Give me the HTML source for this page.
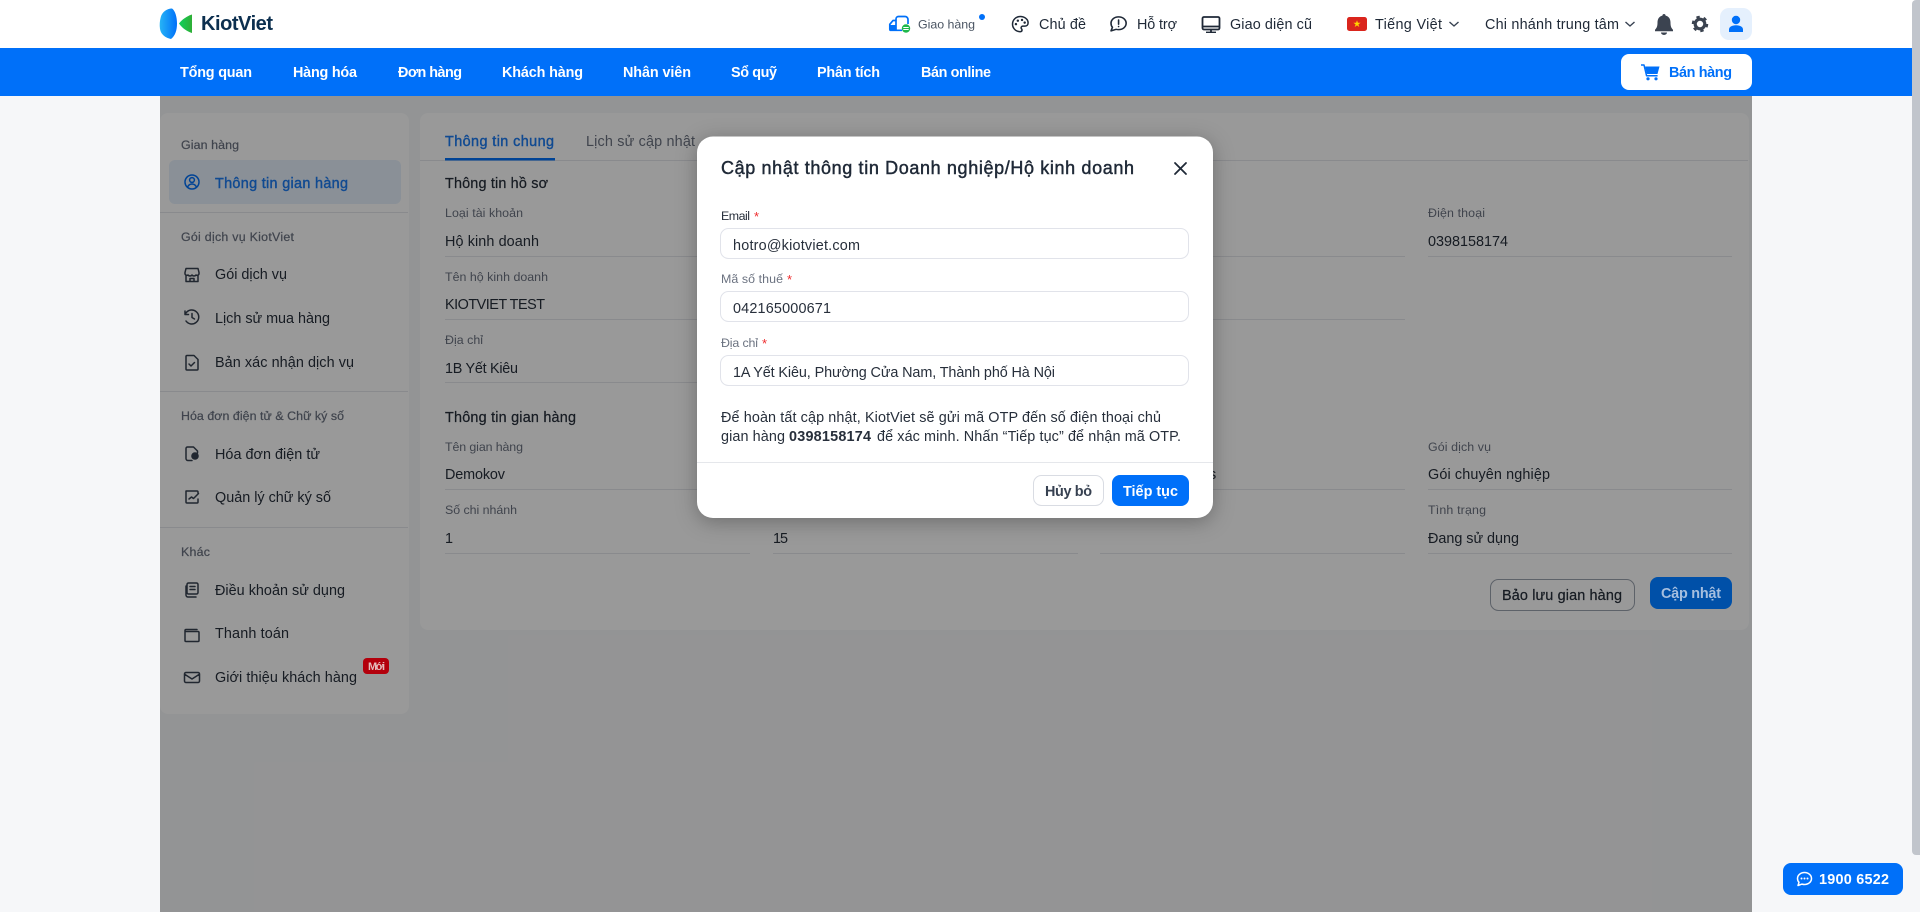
<!DOCTYPE html>
<html lang="vi">
<head>
<meta charset="utf-8">
<title>KiotViet</title>
<style>
html,body{margin:0;padding:0;width:1920px;height:912px;overflow:hidden;background:#f6f7f9}
svg{display:block;position:absolute;left:0;top:0}
text{font-family:"Liberation Sans","Noto Sans CJK SC",sans-serif;font-size:14.4px;white-space:pre}
.b{font-weight:700}
.s12{font-size:12.4px}
.d{fill:#272f3b}
.g{fill:#6b7280}
.w{fill:#fff}
.bl{fill:#0070f9}
.m{stroke-width:.22}
.d.m{stroke:#272f3b}
.g.m{stroke:#6b7280}
.sb{fill:#1d7cf2;stroke:#1d7cf2;stroke-width:.4}
.ln{stroke:#e5e7eb;stroke-width:1;fill:none}
.ic{fill:none;stroke:#374151;stroke-width:1.5;stroke-linecap:round;stroke-linejoin:round}
</style>
</head>
<body>
<svg width="1920" height="912" viewBox="0 0 1920 912" xmlns="http://www.w3.org/2000/svg">
<defs>
<linearGradient id="lb" x1="0" x2="1" y1="0" y2="0"><stop offset="0" stop-color="#27b4f6"/><stop offset="1" stop-color="#0070f9"/></linearGradient>
<linearGradient id="lg" x1="0" x2="1" y1="0" y2="0"><stop offset="0" stop-color="#0fd05c"/><stop offset="1" stop-color="#2fae36"/></linearGradient>
</defs>

<!-- page -->
<rect width="1920" height="912" fill="#f6f7f9"/>

<!-- sidebar card -->
<rect x="160" y="113" width="249" height="601" rx="8" fill="#fff"/>
<text x="181" y="149" textLength="58" class="s12 g m">Gian hàng</text>
<rect x="169" y="160" width="232" height="44" rx="6" fill="#e6f0fc"/>
<g fill="none" stroke="#0070f9" stroke-width="1.5"><circle cx="192" cy="182" r="7"/><circle cx="192" cy="180" r="2.400"/><path d="M187.500 187c1-2 2.500-3 4.500-3s3.500 1 4.500 3"/></g>
<text x="215" y="188" textLength="133" class="sb">Thông tin gian hàng</text>
<path class="ln" d="M160 212.500H408"/>
<text x="181" y="241" textLength="113" class="s12 g m">Gói dịch vụ KiotViet</text>
<g class="ic">
<path d="M186 268.500h12l1 4v1.500a2 2 0 0 1-3 1 2.500 2.500 0 0 1-4 0 2.500 2.500 0 0 1-4 0 2 2 0 0 1-3-1v-1.500zM186 276v5.500h12V276M190 281.500v-3h4v3"/>
<path d="M186 313a7 7 0 1 1 0 8M185 311v3.500h3.500M192 313.500v4l2.500 1.500"/>
<path d="M187 355.500h7l4 4v9.500a1 1 0 0 1-1 1h-10a1 1 0 0 1-1-1v-12.500a1 1 0 0 1 1-1zM189 364l2 2 3.500-3.500"/>
</g>
<text x="215" y="279" textLength="72" class="d">Gói dịch vụ</text>
<text x="215" y="323" textLength="115" class="d">Lịch sử mua hàng</text>
<text x="215" y="367" textLength="139" class="d">Bản xác nhận dịch vụ</text>
<path class="ln" d="M160 391.500H408"/>
<text x="181" y="420" textLength="163" class="s12 g m">Hóa đơn điện tử &amp; Chữ ký số</text>
<g class="ic">
<path d="M192 460.500h-4a2 2 0 0 1-2-2v-10a1.500 1.500 0 0 1 1.500-1.500h6l4 4v2"/>
<path d="M186 491h11a1 1 0 0 1 1 1v1M198 499v3a1 1 0 0 1-1 1h-10a1 1 0 0 1-1-1v-11M189 499l2.500-2 2 1.500 5-5"/>
<path d="M188.500 583h8a1.500 1.500 0 0 1 1.500 1.500v8a1.500 1.500 0 0 1-1.500 1.500h-8a1.500 1.500 0 0 1-1.500-1.500v-8a1.500 1.500 0 0 1 1.500-1.500zM186 586v9a2 2 0 0 0 2 2h8M190 586.500h5M190 589.500h5"/>
<path d="M197 629.500h-11a1 1 0 0 0-1 1v10a1 1 0 0 0 1 1h12a1 1 0 0 0 1-1v-8a1 1 0 0 0-1-1H185"/>
<path d="M186 672.500h12a1.500 1.500 0 0 1 1.500 1.500v7a1.500 1.500 0 0 1-1.500 1.500h-12a1.500 1.500 0 0 1-1.500-1.500v-7a1.500 1.500 0 0 1 1.500-1.500zM185 674.500l7 4.500 7-4.500"/>
</g>
<circle cx="195" cy="456" r="3.800" fill="#374151"/>
<text x="215" y="459" textLength="105" class="d">Hóa đơn điện tử</text>
<text x="215" y="502" textLength="116" class="d">Quản lý chữ ký số</text>
<path class="ln" d="M160 527.500H408"/>
<text x="181" y="556" textLength="29" class="s12 g m">Khác</text>
<text x="215" y="595" textLength="130" class="d">Điều khoản sử dụng</text>
<text x="215" y="638" textLength="74" class="d">Thanh toán</text>
<text x="215" y="682" textLength="142" class="d">Giới thiệu khách hàng</text>

<!-- main card -->
<rect x="420" y="113" width="1329" height="517" rx="8" fill="#fff"/>
<path class="ln" d="M420 160.500H1748"/>
<text x="445" y="146" textLength="109" class="sb">Thông tin chung</text>
<rect x="445" y="158" width="110" height="2.500" fill="#0070f9"/>
<text x="586" y="146" textLength="109" class="g">Lịch sử cập nhật</text>
<text x="445" y="188" textLength="103" class="d m">Thông tin hồ sơ</text>
<text x="445" y="217" textLength="78" class="s12 g">Loại tài khoản</text>
<text x="445" y="246" textLength="94" class="d">Hộ kinh doanh</text>
<text x="445" y="281" textLength="103" class="s12 g">Tên hộ kinh doanh</text>
<text x="445" y="309" textLength="100" class="d">KIOTVIET TEST</text>
<text x="445" y="344" textLength="38" class="s12 g">Địa chỉ</text>
<text x="445" y="373" textLength="73" class="d">1B Yết Kiêu</text>
<text x="445" y="422" textLength="131" class="d m">Thông tin gian hàng</text>
<text x="445" y="451" textLength="78" class="s12 g">Tên gian hàng</text>
<text x="445" y="479" textLength="60" class="d">Demokov</text>
<text x="445" y="514" textLength="72" class="s12 g">Số chi nhánh</text>
<text x="445" y="543" textLength="6" class="d">1</text>
<text x="773" y="543" textLength="15" class="d">15</text>
<text x="1209" y="479" class="d">s</text>
<path class="ln" d="M445 256.500H750M445 319.500H750M445 382.500H750M445 489.500H750M445 553.500H750M773 553.500H1078M1100 256.500H1405M1100 319.500H1405M1100 489.500H1405M1100 553.500H1405M1428 256.500H1732M1428 489.500H1732M1428 553.500H1732"/>
<text x="1428" y="217" textLength="57" class="s12 g">Điện thoại</text>
<text x="1428" y="246" textLength="80" class="d">0398158174</text>
<text x="1428" y="451" textLength="63" class="s12 g">Gói dịch vụ</text>
<text x="1428" y="479" textLength="122" class="d">Gói chuyên nghiệp</text>
<text x="1428" y="514" textLength="58" class="s12 g">Tình trạng</text>
<text x="1428" y="543" textLength="91" class="d">Đang sử dụng</text>
<rect x="1490.500" y="579.500" width="144" height="31" rx="8" fill="#fff" stroke="#9ca3af"/>
<text x="1502" y="600" textLength="120" class="d m">Bảo lưu gian hàng</text>

<!-- overlay -->
<rect x="160" y="96" width="1592" height="816" fill="#000" fill-opacity=".4"/>

<!-- dimmed accents drawn with their on-screen colours -->
<rect x="363" y="658" width="26" height="16" rx="4" fill="#b3000c"/>
<text x="368" y="670" textLength="17" class="b" style="font-size:11px" fill="#e6bcbc">Mới</text>
<rect x="1650" y="577" width="82" height="32" rx="8" fill="#0050a8"/>
<text x="1661" y="598" textLength="60" class="b" fill="#a6bfdf">Cập nhật</text>

<!-- header -->
<rect x="0" y="0" width="1920" height="48" fill="#fff"/>
<path d="M172 8.500c3 2 5 8 5 15s-2 12.500-6 15.500c-5-1-10-4-11-10-.6-4-.3-8 .8-12C162 12 167 8.500 172 8.500z" fill="url(#lb)"/>
<path d="M192 14.500v18.500c-5-1.500-10-5-13-9.500 3-4 8-7.500 13-9z" fill="url(#lg)"/>
<text x="201" y="30" textLength="72" class="b" style="font-size:20px;fill:#0c2f4f">KiotViet</text>

<g fill="none" stroke="#0070f9" stroke-width="1.700" stroke-linejoin="round">
<path d="M896 20.500V19a2.500 2.500 0 0 1 2.500-2.500h6.500a3 3 0 0 1 3 3v4.500"/>
<path d="M896 20.500h-3l-3.200 3.800v5a1 1 0 0 0 1 1h5.200zM896 30.300h6"/>
<path d="M890.500 25h5.500v5h-5.500z" fill="#0070f9" stroke="none"/>
</g>
<circle cx="906" cy="28.500" r="4.200" fill="#1fb84b"/>
<path d="M903.300 27.500h5.400M903.300 29.500h5.400" stroke="#fff" stroke-width=".9"/>
<text x="918" y="28.500" textLength="57" class="s12" fill="#4b5563">Giao hàng</text>
<circle cx="982" cy="17" r="3" fill="#0070f9"/>

<g transform="translate(1011,15) scale(.76)" fill="none" stroke="#1f2937" stroke-width="2" stroke-linejoin="round">
<path d="M12 2C6.500 2 2 6.500 2 12s4.500 10 10 10c1.700 0 2.500-1 2.500-2.200 0-.6-.2-1-.6-1.500-.4-.5-.6-.9-.6-1.500 0-1.200 1-2.100 2.200-2.100h2.400c3 0 4.600-2 4.600-4.400C22.500 5.500 17.800 2 12 2z"/>
<g fill="#1f2937" stroke="none"><circle cx="6.500" cy="12" r="1.600"/><circle cx="9" cy="7.500" r="1.600"/><circle cx="14.500" cy="6.500" r="1.600"/><circle cx="18" cy="10" r="1.600"/></g>
</g>
<text x="1039" y="29" textLength="47" fill="#1f2937">Chủ đề</text>

<g transform="translate(1108.500,14.500) scale(.84,.78)" fill="none" stroke="#1f2937" stroke-width="1.900" stroke-linejoin="round" stroke-linecap="round">
<path d="M12 3c5 0 9 3.600 9 8.200s-4 8.200-9 8.200c-1 0-2-.1-2.900-.4L3 21l1.700-4.600C3.500 15 3 13.400 3 11.200 3 6.600 7 3 12 3z"/>
<path d="M12 7v5.500M12 15.300v.2"/>
</g>
<text x="1137" y="29" textLength="40" fill="#1f2937">Hỗ trợ</text>

<g fill="none" stroke="#1f2937" stroke-width="1.800">
<rect x="1202.500" y="17" width="17" height="12.500" rx="1.500"/>
<path d="M1202.500 26.500h17M1211 30v2"/>
<path d="M1206 32.300h10" stroke-width="1.400"/>
</g>
<text x="1230" y="29" textLength="82" fill="#1f2937">Giao diện cũ</text>

<rect x="1347" y="17" width="20" height="14" rx="2.500" fill="#da251d"/>
<path d="M1357 20.200l.9 2.600h2.700l-2.200 1.600.9 2.600-2.300-1.600-2.300 1.600.9-2.600-2.200-1.600h2.700z" fill="#ffd500"/>
<text x="1375" y="29" textLength="67" fill="#1f2937">Tiếng Việt</text>
<path d="M1449.500 22l4.500 4 4.500-4" fill="none" stroke="#374151" stroke-width="1.400"/>
<text x="1485" y="29" textLength="134" fill="#1f2937">Chi nhánh trung tâm</text>
<path d="M1625.500 22l4.500 4 4.500-4" fill="none" stroke="#374151" stroke-width="1.400"/>

<path d="M1664 14c1 0 1.600.7 1.600 1.600 3.300.8 4.900 3.400 4.900 6.900 0 4 .8 5.400 2.500 7.300v1.400h-18v-1.400c1.700-1.900 2.500-3.300 2.500-7.300 0-3.500 1.600-6.100 4.900-6.900 0-.9.600-1.600 1.600-1.600z" fill="#3b4350"/>
<path d="M1661 32.500h6a3 2.500 0 0 1-6 0z" fill="#3b4350"/>
<circle cx="1700" cy="24" r="4.800" fill="none" stroke="#3b4350" stroke-width="3.200"/>
<circle cx="1700" cy="24" r="7" fill="none" stroke="#3b4350" stroke-width="2.500" stroke-dasharray="3.300 4"/>

<rect x="1720" y="8" width="32" height="32" rx="9" fill="#e5f0fd"/>
<circle cx="1736" cy="20" r="4.200" fill="#0070f9"/>
<path d="M1729 32v-2.500c0-2.500 2.500-4.300 7-4.300s7 1.800 7 4.300V32z" fill="#0070f9"/>

<!-- nav -->
<rect x="0" y="48" width="1920" height="48" fill="#0070f9"/>
<text x="180" y="77" textLength="72" class="b w">Tổng quan</text>
<text x="293" y="77" textLength="64" class="b w">Hàng hóa</text>
<text x="398" y="77" textLength="64" class="b w">Đơn hàng</text>
<text x="502" y="77" textLength="81" class="b w">Khách hàng</text>
<text x="623" y="77" textLength="68" class="b w">Nhân viên</text>
<text x="731" y="77" textLength="46" class="b w">Sổ quỹ</text>
<text x="817" y="77" textLength="63" class="b w">Phân tích</text>
<text x="921" y="77" textLength="70" class="b w">Bán online</text>
<rect x="1621" y="54" width="131" height="36" rx="8" fill="#fff"/>
<path d="M1641 65h3l2.600 10.800h11" fill="none" stroke="#0070f9" stroke-width="1.500" stroke-linejoin="round"/>
<path d="M1645 66.500h14.500l-2 7.500h-10.700z" fill="#0070f9"/>
<circle cx="1648" cy="78.800" r="1.600" fill="#0070f9"/><circle cx="1656" cy="78.800" r="1.600" fill="#0070f9"/>
<text x="1669" y="77" textLength="63" class="b bl">Bán hàng</text>

<!-- modal -->
<rect x="697" y="136.500" width="516" height="381.500" rx="16" fill="#fff" style="filter:drop-shadow(0 4px 10px rgba(0,0,0,.28))"/>
<text x="721" y="174" textLength="413" style="font-size:18px;stroke:#1f2937;stroke-width:.45" fill="#1f2937">Cập nhật thông tin Doanh nghiệp/Hộ kinh doanh</text>
<path d="M1175 163l11 11M1186 163l-11 11" stroke="#1f2937" stroke-width="1.800" stroke-linecap="round"/>

<text x="721" y="220" textLength="29" class="s12 d">Email</text>
<text x="754" y="221" style="font-size:13px" fill="#ef2b2d">*</text>
<rect x="720.500" y="228.500" width="468" height="30" rx="8" fill="#fff" stroke="#e1e3ea"/>
<text x="733" y="250" textLength="127" class="d">hotro@kiotviet.com</text>

<text x="721" y="283" textLength="62" class="s12 g">Mã số thuế</text>
<text x="787" y="284" style="font-size:13px" fill="#ef2b2d">*</text>
<rect x="720.500" y="291.500" width="468" height="30" rx="8" fill="#fff" stroke="#e1e3ea"/>
<text x="733" y="313" textLength="98" class="d">042165000671</text>

<text x="721" y="347" textLength="37" class="s12 g">Địa chỉ</text>
<text x="762" y="348" style="font-size:13px" fill="#ef2b2d">*</text>
<rect x="720.500" y="355.500" width="468" height="30" rx="8" fill="#fff" stroke="#e1e3ea"/>
<text x="733" y="377" textLength="322" class="d">1A Yết Kiêu, Phường Cửa Nam, Thành phố Hà Nội</text>

<text x="721" y="422" textLength="440" class="d">Để hoàn tất cập nhật, KiotViet sẽ gửi mã OTP đến số điện thoại chủ</text>
<text x="721" y="441" textLength="64" class="d">gian hàng</text>
<text x="789" y="441" textLength="82" class="b d">0398158174</text>
<text x="877" y="441" textLength="304" class="d">để xác minh. Nhấn “Tiếp tục” để nhận mã OTP.</text>
<path class="ln" d="M697 462.500H1213"/>
<rect x="1033.500" y="475.500" width="70" height="30" rx="8" fill="#fff" stroke="#d9dce3"/>
<text x="1045" y="496" textLength="47" class="b" fill="#374151">Hủy bỏ</text>
<rect x="1112" y="475" width="77" height="31" rx="8" fill="#0070f9"/>
<text x="1123" y="496" textLength="55" class="b w">Tiếp tục</text>

<!-- scrollbar -->
<path d="M1912 4a4 4 0 0 1 4-4h4v855h-4a4 4 0 0 1-4-4z" fill="#c1c5cc"/>

<!-- hotline -->
<rect x="1783" y="863" width="120" height="32" rx="8" fill="#0070f9"/>
<path d="M1804.500 872.500c4 0 7 2.700 7 6s-3 6-7 6c-1 0-1.800-.2-2.500-.4l-4 1.400 1-3.200c-1-1-1.500-2.400-1.500-3.800 0-3.300 3-6 7-6z" fill="none" stroke="#fff" stroke-width="1.500" stroke-linejoin="round"/>
<circle cx="1801.500" cy="878.500" r="1" fill="#fff"/><circle cx="1804.500" cy="878.500" r="1" fill="#fff"/><circle cx="1807.500" cy="878.500" r="1" fill="#fff"/>
<text x="1819" y="884" textLength="70" class="b w">1900 6522</text>
</svg>
</body>
</html>
